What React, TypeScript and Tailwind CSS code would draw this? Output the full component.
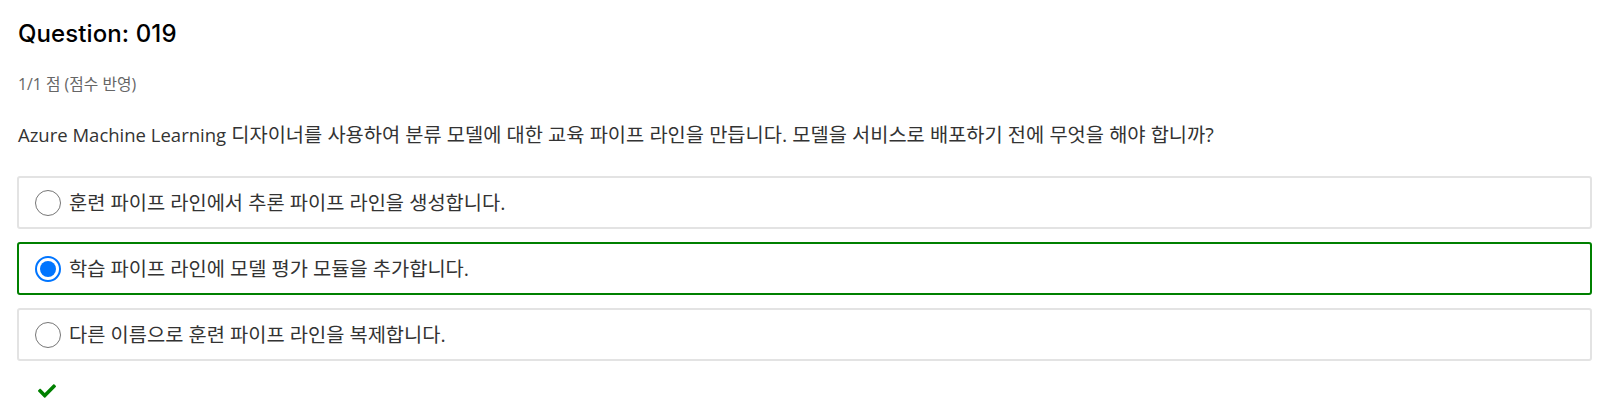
import { FaCheck } from "react-icons/fa";

const options = [
  { text: "훈련 파이프 라인에서 추론 파이프 라인을 생성합니다.", selected: false },
  { text: "학습 파이프 라인에 모델 평가 모듈을 추가합니다.", selected: true },
  { text: "다른 이름으로 훈련 파이프 라인을 복제합니다.", selected: false },
];

function Radio({ checked }: { checked: boolean }) {
  if (checked) {
    return (
      <span className="w-[26px] h-[26px] rounded-full border-2 border-[#0075ff] bg-white flex items-center justify-center shrink-0">
        <span className="w-[16px] h-[16px] rounded-full bg-[#0075ff]" />
      </span>
    );
  }
  return <span className="w-[26px] h-[26px] rounded-full border-[1.5px] border-[#767676] bg-white shrink-0" />;
}

export default function App() {
  return (
    <div className="bg-white min-h-screen pl-[17px] pr-[11px] pt-[18px] font-['Open_Sans','Noto_Sans_CJK_KR',sans-serif] text-[#333]">
      {/* Header */}
      <h1 className="pl-px text-[24px] leading-[32px] font-medium text-black font-['Inter','Noto_Sans_CJK_KR',sans-serif] tracking-[0.1px]">
        Question: 019
      </h1>
      <p className="pl-px mt-[24px] text-[15.8px] leading-[20px] text-[#666]">1/1 점 (점수 반영)</p>

      {/* Question */}
      <p className="pl-px mt-[27px] text-[19.8px] leading-[28px] text-[#333]">
        <span className="text-[18.5px]">Azure Machine Learning</span> 디자이너를 사용하여 분류 모델에 대한 교육 파이프 라인을 만듭니다. 모델을 서비스로 배포하기 전에 무엇을 해야 합니까?
      </p>

      {/* Options */}
      <div className="mt-[27px] flex flex-col gap-[13px]">
        {options.map((o) => (
          <label
            key={o.text}
            className={
              o.selected
                ? "h-[53px] flex items-center gap-[8px] pl-[16px] rounded-[3px] border-2 border-[#008000]"
                : "h-[53px] flex items-center gap-[8px] pl-[16px] rounded-[3px] border-2 border-[#e3e3e3]"
            }
          >
            <Radio checked={o.selected} />
            <span className="text-[19.8px] leading-[28px] text-[#333]">{o.text}</span>
          </label>
        ))}
      </div>

      {/* Result */}
      <div className="mt-[21px] pl-[21px]">
        <FaCheck className="w-[18px] h-[18px] text-[#008000]" />
      </div>
    </div>
  );
}
